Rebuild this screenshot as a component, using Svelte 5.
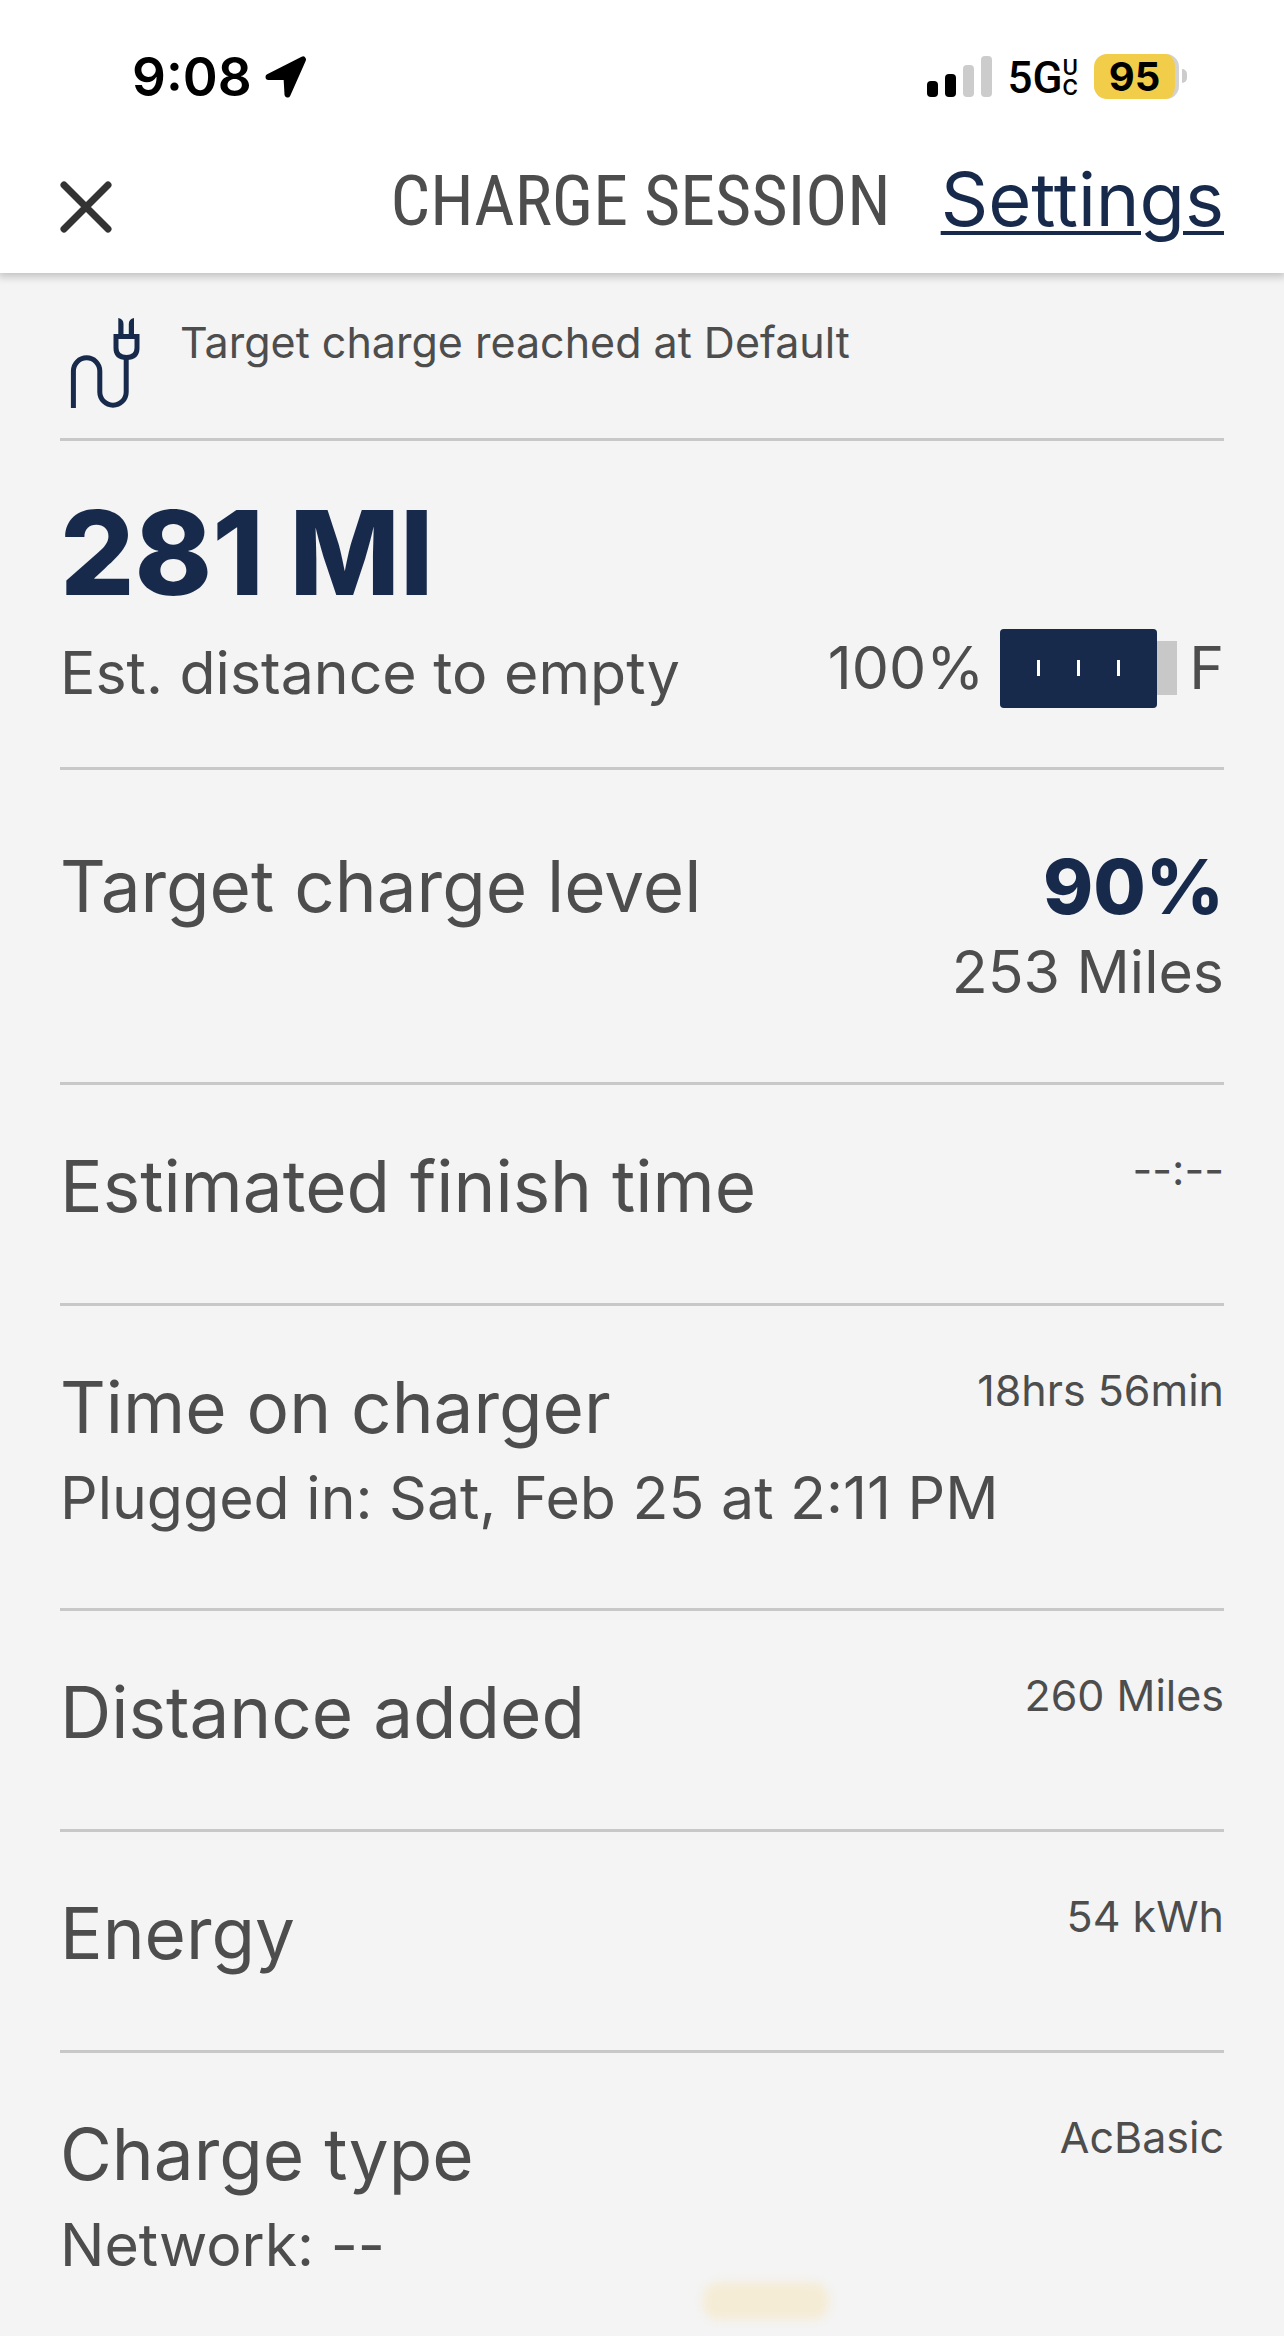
<script>
    let time = "9:08";
    let phoneBattery = 95;
    let signal = 2;

    let status = "Target charge reached at Default";
    let range = 281;
    let charge = 100;

    let target = { percent: 90, miles: 253 };

    let details = [
        { label: "Estimated finish time", value: "--:--" },
        { label: "Time on charger", value: "18hrs 56min", note: "Plugged in: Sat, Feb 25 at 2:11 PM" },
        { label: "Distance added", value: "260 Miles" },
        { label: "Energy", value: "54 kWh" },
        { label: "Charge type", value: "AcBasic", note: "Network: --" },
    ];
</script>

<div class="screen">
    <header>
        <div class="status-bar">
            <div class="clock">
                <span>{time}</span>
                <svg width="42" height="42" viewBox="0 0 42 42">
                    <path d="M38 3.500L22.500 38.500L21.500 21H3.500Z" stroke="#000" stroke-width="6" stroke-linejoin="round" />
                </svg>
            </div>
            <div class="phone">
                <div class="signal">
                    {#each [1, 2, 3, 4] as bar}
                        <i class="bar bar{bar}" class:on={bar <= signal}></i>
                    {/each}
                </div>
                <div class="network">
                    <span>5G</span>
                    <span class="uc"><b>U</b><b>C</b></span>
                </div>
                <div class="phone-battery">
                    <span class="level">{phoneBattery}</span>
                    <i class="tip"></i>
                </div>
            </div>
        </div>
        <nav>
            <button class="close" aria-label="Close">
                <svg width="52" height="52" viewBox="0 0 52 52">
                    <path d="M4 4L48 48M48 4L4 48" stroke="#333" stroke-width="7" stroke-linecap="round" />
                </svg>
            </button>
            <h1>CHARGE SESSION</h1>
            <a href="#settings">Settings</a>
        </nav>
    </header>

    <main>
        <section class="notice">
            <svg width="70" height="92" viewBox="0 0 70 92" fill="none" stroke="#172a4b" stroke-width="5">
                <path d="M3.400 91V54a13.200 13.200 0 0 1 26.400 0V75a13.200 13.200 0 0 0 26.400 0V42" />
                <path d="M46 19.500H67V31Q67 40.500 56.500 40.500Q46 40.500 46 31Z" />
                <path d="M48.300 1Q53.500 2 53.500 7V18H48.300ZM64 1Q58.800 2 58.800 7V18H64Z" fill="#172a4b" stroke="none" />
            </svg>
            <p>{status}</p>
        </section>

        <section class="range">
            <h2>{range} MI</h2>
            <div class="line">
                <span>Est. distance to empty</span>
                <div class="gauge">
                    <span>{charge}%</span>
                    <div class="cell">
                        <div class="fill" style="width: {charge}%"></div>
                        <i></i><i></i><i></i>
                    </div>
                    <div class="nub"></div>
                    <span class="full">F</span>
                </div>
            </div>
        </section>

        <section class="target">
            <span class="label">Target charge level</span>
            <div class="goal">
                <strong>{target.percent}%</strong>
                <span>{target.miles} Miles</span>
            </div>
        </section>

        {#each details as item}
            <section class="detail">
                <span class="label">{item.label}</span>
                <span class="value">{item.value}</span>
                {#if item.note}
                    <p class="note">{item.note}</p>
                {/if}
            </section>
        {/each}
    </main>

    <div class="glow"></div>
</div>

<style>
    :global(body) {
        background: #f4f4f4;
    }
    .screen {
        position: relative;
        font-family: Inter, "Liberation Sans", sans-serif;
        color: #4d4d4d;
        overflow: hidden;
    }
    svg {
        display: block;
        flex: none;
    }
    h1, h2, p {
        margin: 0;
    }
    header {
        background: #fff;
        box-shadow: 0 2px 8px 2px rgba(0, 0, 0, 0.2);
    }
    .status-bar {
        display: flex;
        justify-content: space-between;
        align-items: center;
        height: 152px;
        padding: 0 97px 0 132px;
        color: #000;
    }
    .clock {
        display: flex;
        align-items: center;
        gap: 13px;
        padding-top: 2px;
        font-size: 53px;
        font-weight: 600;
    }
    .phone {
        display: flex;
        align-items: center;
        gap: 16px;
    }
    .signal {
        display: flex;
        align-items: flex-end;
        gap: 7px;
        height: 42px;
    }
    .bar {
        width: 11px;
        border-radius: 4px;
        background: #ccc;
    }
    .bar.on {
        background: #000;
    }
    .bar1 {
        height: 16px;
    }
    .bar2 {
        height: 23px;
    }
    .bar3 {
        height: 32px;
    }
    .bar4 {
        height: 41px;
    }
    .network {
        display: flex;
        align-items: center;
        padding-top: 4px;
        font-family: Roboto, sans-serif;
        font-size: 44px;
        font-weight: 500;
    }
    .uc {
        display: flex;
        flex-direction: column;
        font-family: Inter, sans-serif;
        font-size: 21px;
        line-height: 20px;
    }
    .uc b {
        font-weight: 600;
    }
    .phone-battery {
        display: flex;
        align-items: center;
        gap: 3px;
    }
    .level {
        box-sizing: border-box;
        width: 85px;
        height: 45px;
        border-right: 4px solid #d2d2d2;
        border-radius: 13px;
        background: #f2cd4a;
        font-size: 40px;
        font-weight: 700;
        line-height: 45px;
        text-align: center;
    }
    .tip {
        width: 5px;
        height: 14px;
        border-radius: 0 5px 5px 0;
        background: #ccc;
    }
    nav {
        display: flex;
        align-items: center;
        box-sizing: border-box;
        height: 121px;
        padding: 0 60px 28px;
    }
    .close {
        margin-right: auto;
        padding: 16px 0 0;
        border: 0;
        background: none;
        cursor: pointer;
    }
    h1 {
        margin-right: 50px;
        padding-top: 4px;
        font-family: "Roboto Condensed", Roboto, sans-serif;
        font-size: 70px;
        font-weight: 400;
        line-height: 84px;
    }
    nav a {
        color: #172a4b;
        font-size: 74px;
        line-height: 84px;
        text-decoration-thickness: 4px;
        text-underline-offset: 5px;
    }
    main {
        padding: 0 60px;
    }
    section {
        border-bottom: 3px solid #c8c8c8;
    }
    .notice {
        display: flex;
        gap: 40px;
        padding: 44px 0 29px 10px;
    }
    .notice p {
        font-size: 43px;
        line-height: 50px;
    }
    .range {
        padding: 42px 0 44px;
    }
    h2 {
        color: #172a4b;
        font-size: 117px;
        font-weight: 800;
        line-height: 140px;
    }
    .line {
        display: flex;
        justify-content: space-between;
        align-items: flex-start;
        font-size: 59px;
        line-height: 100px;
    }
    .gauge {
        display: flex;
        align-items: center;
        line-height: 90px;
    }
    .cell {
        position: relative;
        display: flex;
        justify-content: space-evenly;
        align-items: center;
        width: 157px;
        height: 79px;
        margin-left: 16px;
        border-radius: 4px;
        background: #c8c8c8;
        overflow: hidden;
    }
    .fill {
        position: absolute;
        inset: 0 auto 0 0;
        background: #172a4b;
    }
    .cell i {
        position: relative;
        width: 3px;
        height: 16px;
        background: #fff;
    }
    .nub {
        width: 20px;
        height: 54px;
        background: #c8c8c8;
    }
    .full {
        margin-left: 12px;
    }
    .target {
        display: flex;
        justify-content: space-between;
        padding: 74px 0 66px;
    }
    .label {
        font-size: 71px;
        line-height: 84px;
    }
    .goal {
        display: flex;
        flex-direction: column;
        align-items: flex-end;
        font-size: 59px;
        line-height: 88px;
    }
    .goal strong {
        color: #172a4b;
        font-size: 76px;
        font-weight: 800;
        line-height: 84px;
    }
    .detail {
        display: grid;
        grid-template-columns: 1fr auto;
        padding: 59px 0 75px;
    }
    .detail:last-child {
        padding-bottom: 52px;
        border-bottom: 0;
    }
    .note {
        grid-column: 1 / -1;
        margin-top: 14px;
        font-size: 59px;
        line-height: 70px;
    }
    .value {
        font-size: 43px;
        line-height: 50px;
    }
    .glow {
        position: absolute;
        bottom: 12px;
        left: 703px;
        width: 126px;
        height: 38px;
        border-radius: 16px;
        background: #f5ecd6;
        filter: blur(4px);
    }
</style>
